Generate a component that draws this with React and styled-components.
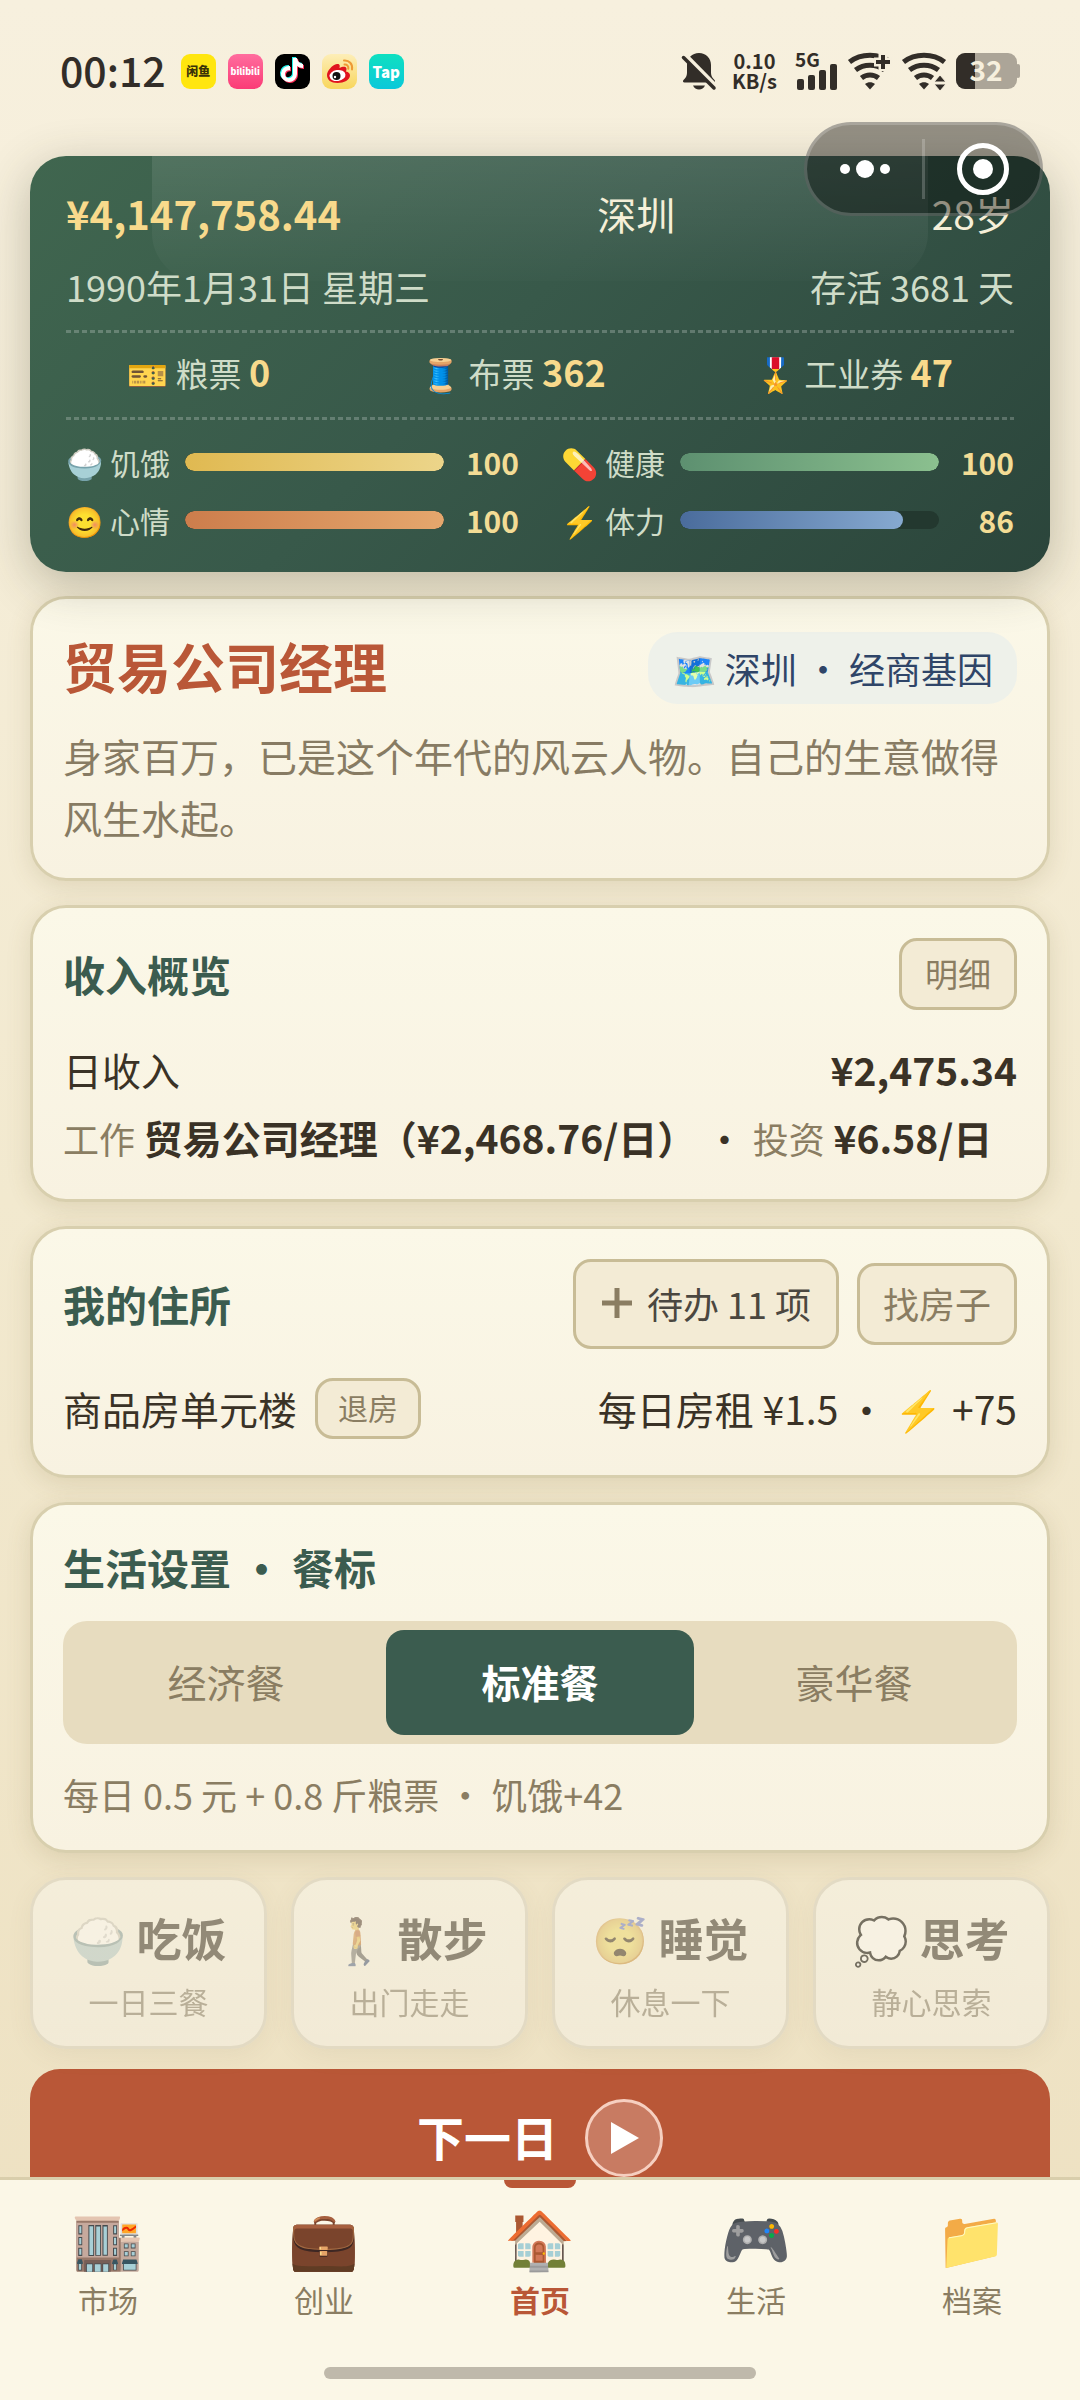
import styled, { createGlobalStyle } from "styled-components";

const GlobalStyle = createGlobalStyle`
  * {
    box-sizing: border-box;
  }
  body {
    margin: 0;
    color: #3a3226;
    font-family: "Noto Sans CJK SC", "Noto Color Emoji", sans-serif;
  }
  button {
    font-family: inherit;
    cursor: pointer;
  }
  h1, h2, p {
    margin: 0;
  }
  svg {
    display: block;
    overflow: visible;
  }
`;

const Page = styled.div`
  position: relative;
  height: 100vh;
  display: flex;
  flex-direction: column;
  background: linear-gradient(#f7f0de, #f2e9cf 50%, #ede0c0);
`;

/* status bar */
const StatusBar = styled.header`
  display: flex;
  justify-content: space-between;
  align-items: center;
  height: 108px;
  padding: 34px 60px 0;
  flex-shrink: 0;
  color: #322d28;
`;
const StatusGroup = styled.div`
  display: flex;
  align-items: center;
  gap: ${(props) => props.$gap}px;
`;
const Clock = styled.time`
  font-size: 41px;
  line-height: 44px;
  font-weight: 500;
  margin-right: 3px;
  padding-bottom: 4px;
`;
const AppIcon = styled.span`
  display: flex;
  justify-content: center;
  align-items: center;
  width: 35px;
  height: 35px;
  border-radius: 9px;
  font-size: ${(props) => props.$size || 12}px;
  line-height: 1;
  font-weight: 900;
  color: ${(props) => props.$color || "white"};
  background: ${(props) => props.$bg};
`;
const NetSpeed = styled.span`
  display: flex;
  flex-direction: column;
  margin: 0 8px 0 6px;
  font-size: 20px;
  line-height: 20px;
  font-weight: 700;
  text-align: center;
`;

/* mini program capsule, floats over the page */
const Capsule = styled.div`
  position: absolute;
  top: 122px;
  right: 37px;
  z-index: 5;
  display: flex;
  align-items: center;
  width: 239px;
  height: 94px;
  border: 3px solid rgba(255, 255, 255, 0.2);
  border-radius: 47px;
  background-color: rgba(0, 0, 0, 0.4);
`;
const CapsuleButton = styled.button`
  flex: 1;
  display: flex;
  justify-content: center;
  padding: 0;
  border: none;
  background: none;
`;
const CapsuleLine = styled.span`
  width: 3px;
  height: 60px;
  background-color: rgba(255, 255, 255, 0.2);
`;

const Main = styled.main`
  flex: 1;
  min-height: 0;
  overflow-y: auto;
  scrollbar-width: none;
  display: flex;
  flex-direction: column;
  gap: 24px;
  padding: 48px 30px 0;
  > * {
    flex-shrink: 0;
  }
`;

/* summary panel */
const Summary = styled.section`
  position: relative;
  z-index: 1;
  padding: 25px 36px 30px;
  border-radius: 36px;
  color: #cfdcc8;
  background: linear-gradient(135deg, #40664f, #38594a 45%, #2b453b);
  box-shadow: 0 12px 48px rgba(60, 60, 40, 0.3);
  &::before {
    content: "";
    position: absolute;
    top: 0;
    left: 12%;
    right: 12%;
    height: 30%;
    border-radius: 0 0 48px 48px;
    background: linear-gradient(rgba(255, 255, 255, 0.1), rgba(255, 255, 255, 0.01));
  }
`;
const SummaryRow = styled.div`
  position: relative;
  display: flex;
  justify-content: space-between;
  font-size: ${(props) => (props.$top ? 39 : 36)}px;
  line-height: ${(props) => (props.$top ? 64 : 56)}px;
  margin-bottom: ${(props) => (props.$top ? 13 : 16)}px;
  color: ${(props) => (props.$top ? "#f5efd8" : "inherit")};
`;
const Money = styled.strong`
  font-size: 40px;
  color: #f8da8c;
`;
const Dashes = styled.div`
  height: 3px;
  background: repeating-linear-gradient(
    90deg,
    rgba(255, 255, 255, 0.22) 0 5px,
    transparent 5px 8px
  );
`;
const Tickets = styled.div`
  display: flex;
  justify-content: space-around;
  gap: 28px;
  padding: 10px 0 15px;
  font-size: 33px;
  line-height: 57px;
  strong {
    font-size: 36px;
    color: #f8da8c;
  }
`;
const Stats = styled.div`
  display: grid;
  grid-template-columns: 1fr 1fr;
  gap: 14px 42px;
  padding-top: 20px;
`;
const Stat = styled.div`
  display: flex;
  align-items: center;
  gap: 14px;
  font-size: 30px;
  line-height: 44px;
`;
const StatLabel = styled.span`
  width: 105px;
  white-space: nowrap;
`;
const Track = styled.div`
  flex: 1;
  height: 18px;
  border-radius: 9px;
  overflow: hidden;
  background-color: #23382f;
`;
const Fill = styled.div`
  height: 100%;
  border-radius: 9px;
  background: linear-gradient(90deg, ${(props) => props.$from}, ${(props) => props.$to});
`;
const StatValue = styled.strong`
  width: 61px;
  text-align: right;
  color: #f3dc95;
`;

/* cards */
const Card = styled.section`
  padding: 30px;
  border: 3px solid #d8cfae;
  border-radius: 36px;
  background: linear-gradient(#fbf8e8, #f8f2e1);
  box-shadow: 0 6px 24px rgba(120, 100, 50, 0.16);
`;
const CardHead = styled.div`
  display: flex;
  justify-content: space-between;
  align-items: center;
  margin-bottom: ${(props) => props.$gap || 28}px;
`;
const JobTitle = styled.h1`
  padding-bottom: 4px;
  font-size: 54px;
  line-height: 74px;
  color: #b95737;
`;
const CardTitle = styled.h2`
  font-size: 42px;
  line-height: 64px;
  color: #3b5c4f;
`;
const Origin = styled.span`
  padding: 0 24px;
  border-radius: 30px;
  font-size: 36px;
  line-height: 72px;
  color: #2f4568;
  background-color: #eef1ea;
`;
const Description = styled.p`
  font-size: 39px;
  line-height: 62px;
  color: #877b63;
`;
const Row = styled.div`
  display: flex;
  justify-content: space-between;
  align-items: center;
  margin-bottom: 6px;
  font-size: 39px;
  line-height: 62px;
`;
const Breakdown = styled.p`
  font-size: 39px;
  line-height: 62px;
  white-space: nowrap;
`;
const Muted = styled.span`
  font-size: 36px;
  color: #8a7d62;
`;
const Hint = styled.p`
  margin-top: 26px;
  padding-bottom: 2px;
  font-size: 36px;
  line-height: 48px;
  color: #8a7d62;
`;
const Group = styled.div`
  display: flex;
  align-items: center;
  gap: 18px;
`;
const Button = styled.button`
  display: flex;
  align-items: center;
  gap: 14px;
  height: ${(props) => props.$height}px;
  padding: 0 ${(props) => props.$pad || 23}px 2px;
  border: 3px solid #c8bc96;
  border-radius: 18px;
  font-size: ${(props) => props.$size}px;
  color: ${(props) => (props.$dark ? "#4b4740" : "#8a7d62")};
  background-color: #f3ebd5;
`;

const Segments = styled.div`
  display: flex;
  gap: 6px;
  padding: 9px;
  border-radius: 24px;
  background-color: #e7dcbf;
`;
const Segment = styled.button`
  flex: 1;
  height: 105px;
  padding: 0 0 4px;
  border: none;
  border-radius: 18px;
  font-size: 39px;
  font-weight: ${(props) => (props.$active ? 700 : 400)};
  color: ${(props) => (props.$active ? "white" : "#8a7d62")};
  background-color: ${(props) => (props.$active ? "#3b5c4f" : "transparent")};
`;

const Actions = styled.div`
  display: grid;
  grid-template-columns: repeat(4, 1fr);
  gap: 24px;
`;
const Action = styled.button`
  height: 172px;
  padding: 4px 0 0;
  border: 3px solid #dcd3b8;
  border-radius: 36px;
  color: #3a3226;
  background: linear-gradient(#fbf8e8, #f8f2e1);
  box-shadow: 0 6px 24px rgba(120, 100, 50, 0.16);
  filter: grayscale(0.4);
  opacity: 0.5;
`;
const ActionName = styled.strong`
  display: block;
  font-size: 45px;
  line-height: 66px;
`;
const ActionNote = styled.span`
  display: block;
  font-size: 30px;
  line-height: 48px;
  padding-top: 6px;
  color: #8a7d62;
`;
const NextDay = styled.button`
  display: flex;
  justify-content: center;
  align-items: center;
  gap: 27px;
  height: 138px;
  margin-top: -4px;
  padding: 0;
  border: none;
  border-radius: 30px;
  font-size: 47px;
  font-weight: 700;
  color: white;
  background-color: #b95737;
`;
const NextLabel = styled.span`
  padding-bottom: 6px;
`;
const PlayCircle = styled.span`
  display: flex;
  justify-content: center;
  align-items: center;
  width: 78px;
  height: 78px;
  border: 3px solid #f6cfc0;
  border-radius: 50%;
  background-color: rgba(255, 255, 255, 0.22);
`;

/* bottom navigation */
const Footer = styled.footer`
  display: flex;
  flex-direction: column;
  align-items: center;
  flex-shrink: 0;
  height: 223px;
  border-top: 3px solid #d9ceac;
  background-color: #fbf7e7;
`;
const Nav = styled.nav`
  display: flex;
  width: 100%;
  height: 187px;
`;
const NavItem = styled.a`
  flex: 1;
  position: relative;
  display: flex;
  flex-direction: column;
  align-items: center;
  gap: 7px;
  padding-top: 22px;
  font-size: 30px;
  line-height: 48px;
  font-weight: ${(props) => (props.$active ? 700 : 400)};
  color: ${(props) => (props.$active ? "#b95737" : "#8a7d62")};
  text-decoration: none;
  &::before {
    content: "";
    display: ${(props) => (props.$active ? "block" : "none")};
    position: absolute;
    top: 0;
    width: 72px;
    height: 8px;
    border-radius: 0 0 8px 8px;
    background-color: #b95737;
  }
`;
const NavIcon = styled.span`
  font-size: 57px;
  line-height: 66px;
`;
const HomeIndicator = styled.div`
  width: 40%;
  height: 12px;
  border-radius: 6px;
  background-color: #bfb9ab;
`;

const tickets = [
  { icon: "🎫", name: "粮票", count: 0 },
  { icon: "🧵", name: "布票", count: 362 },
  { icon: "🎖️", name: "工业券", count: 47 },
];

const stats = [
  { icon: "🍚", name: "饥饿", value: 100, from: "#e0b951", to: "#ecd58a" },
  { icon: "💊", name: "健康", value: 100, from: "#5d9070", to: "#8bc08f" },
  { icon: "😊", name: "心情", value: 100, from: "#cc7d4c", to: "#e5a76d" },
  { icon: "⚡", name: "体力", value: 86, from: "#4a6c9c", to: "#86a9d0" },
];

const meals = ["经济餐", "标准餐", "豪华餐"];

const actions = [
  { icon: "🍚", name: "吃饭", note: "一日三餐" },
  { icon: "🚶", name: "散步", note: "出门走走" },
  { icon: "😴", name: "睡觉", note: "休息一下" },
  { icon: "💭", name: "思考", note: "静心思索" },
];

const navItems = [
  { icon: "🏬", name: "市场" },
  { icon: "💼", name: "创业" },
  { icon: "🏠", name: "首页", active: true },
  { icon: "🎮", name: "生活" },
  { icon: "📁", name: "档案" },
];

const notePath = "M16 2h4c.5 3.500 2.500 5.500 6 6v4c-2.300 0-4.300-.7-6-1.900V18a8 8 0 1 1-7-7.900v4.200a4 4 0 1 0 3 3.700z";

const TikTok = () => (
  <svg width="30" height="30" viewBox="0 0 30 30">
    <path d={notePath} fill="#25f4ee" transform="translate(-1 -1)" />
    <path d={notePath} fill="#fe2c55" transform="translate(1 1)" />
    <path d={notePath} fill="white" />
  </svg>
);

const Weibo = () => (
  <svg width="35" height="35" viewBox="0 0 35 35">
    <path
      d="M5 21c0-4 5-10 10-11 3-.5 3 2 2.500 4 3-1.500 7-2 7 1 0 1-.5 2-.5 2.500 2.500.5 4 2 4 4C28 26 22 29 15.500 29S5 26 5 21z"
      fill="#e0141e"
    />
    <ellipse cx="15.500" cy="21.500" rx="8" ry="5.500" fill="white" transform="rotate(-8 15.500 21.500)" />
    <circle cx="14.500" cy="22" r="4" fill="#111" />
    <circle cx="13" cy="23" r="1.200" fill="white" />
    <path d="M22 6.500c5-.5 9 3.500 8 9M22.500 10.500c2.500-.3 4.300 1.700 3.800 4.200" fill="none" stroke="#ee9a35" strokeWidth="2" strokeLinecap="round" />
  </svg>
);

const BellOff = () => (
  <svg width="34" height="38" viewBox="0 0 34 38" fill="currentColor">
    <path d="M17 1c-7 0-12 5-12 12v8c0 3-1.500 5-3.500 7-1 1-.5 2.500 1 2.500h29c1.500 0 2-1.500 1-2.500-2-2-3.500-4-3.500-7v-8c0-7-5-12-12-12z" />
    <path d="M11 33.500h12c-1 2.500-3.500 4-6 4s-5-1.500-6-4z" />
    <path d="M4 3.500 34 34" stroke="#f6efdd" strokeWidth="4" />
    <path d="M1.500 5.500 32 36" stroke="currentColor" strokeWidth="3.500" strokeLinecap="round" />
  </svg>
);

const Signal = () => (
  <svg width="43" height="38" viewBox="0 0 43 38" fill="currentColor">
    <text x="0" y="15" fontSize="19" fontWeight="700">5G</text>
    <rect x="2" y="27" width="7" height="11" rx="2" />
    <rect x="13" y="23" width="7" height="15" rx="2" />
    <rect x="24" y="18" width="7" height="20" rx="2" />
    <rect x="35" y="12" width="7" height="26" rx="2" />
  </svg>
);

const Wifi = ({ plus }) => (
  <svg width="44" height="38" viewBox="0 0 44 38" fill="none" stroke="currentColor" strokeWidth="5">
    <path d="M1.500 10C13 1 31 1 42.500 10" />
    <path d="M7.500 18c8.500-6.500 20.500-6.500 29 0" />
    <path d="M13.500 26c5-4 12-4 17 0" />
    <path d="M17 32c3-2.500 7-2.500 10 0L22 37.500z" fill="currentColor" stroke="none" />
    {plus ? (
      <>
        <path d="M26 10h18M35 1v18" stroke="#f6efdd" strokeWidth="9" />
        <path d="M28 10h14M35 3v14" strokeWidth="4" />
      </>
    ) : (
      <path d="M38 23l6 7H32zM38 39l6-7H32z" fill="currentColor" stroke="#f6efdd" strokeWidth="1" />
    )}
  </svg>
);

const Battery = () => (
  <svg width="64" height="38" viewBox="0 0 64 38">
    <rect x="0" y="1" width="61" height="36" rx="9" fill="#aca598" />
    <rect x="60" y="12" width="4" height="14" rx="2" fill="#aca598" />
    <path d="M9 1h10v36H9a9 9 0 0 1-9-9V10a9 9 0 0 1 9-9z" fill="#322d28" />
    <text x="30" y="29" fontSize="28" fontWeight="700" textAnchor="middle" fill="#f6efdd">32</text>
  </svg>
);

const App = () => {
  return (
    <Page>
      <GlobalStyle />
      <StatusBar>
        <StatusGroup $gap={12}>
          <Clock>00:12</Clock>
          <AppIcon $bg="#ffe60f" $color="#3a3208">闲鱼</AppIcon>
          <AppIcon $bg="linear-gradient(#ff6d9e, #fb3b76)" $size={9}>bilibili</AppIcon>
          <AppIcon $bg="#000"><TikTok /></AppIcon>
          <AppIcon $bg="linear-gradient(#fdeeb8, #f8d65c)"><Weibo /></AppIcon>
          <AppIcon $bg="linear-gradient(#0fe0c0, #0bc8da)" $size={15}>Tap</AppIcon>
        </StatusGroup>
        <StatusGroup $gap={10}>
          <BellOff />
          <NetSpeed>
            <span>0.10</span>
            <span>KB/s</span>
          </NetSpeed>
          <Signal />
          <Wifi plus />
          <Wifi />
          <Battery />
        </StatusGroup>
      </StatusBar>

      <Capsule>
        <CapsuleButton aria-label="更多">
          <svg width="52" height="20" viewBox="0 0 52 20" fill="white">
            <circle cx="6" cy="10" r="5" />
            <circle cx="26" cy="10" r="9" />
            <circle cx="46" cy="10" r="5" />
          </svg>
        </CapsuleButton>
        <CapsuleLine />
        <CapsuleButton aria-label="关闭">
          <svg width="54" height="54" viewBox="0 0 54 54">
            <circle cx="27" cy="27" r="23.500" fill="none" stroke="white" strokeWidth="5" />
            <circle cx="27" cy="27" r="10" fill="white" />
          </svg>
        </CapsuleButton>
      </Capsule>

      <Main>
        <Summary>
          <SummaryRow $top>
            <Money>¥4,147,758.44</Money>
            <span>深圳</span>
            <span>28岁</span>
          </SummaryRow>
          <SummaryRow>
            <span>1990年1月31日 星期三</span>
            <span>存活 3681 天</span>
          </SummaryRow>
          <Dashes />
          <Tickets>
            {tickets.map((item) => (
              <span key={item.name}>
                {item.icon} {item.name} <strong>{item.count}</strong>
              </span>
            ))}
          </Tickets>
          <Dashes />
          <Stats>
            {stats.map((item) => (
              <Stat key={item.name}>
                <StatLabel>{item.icon} {item.name}</StatLabel>
                <Track role="progressbar" aria-label={item.name} aria-valuenow={item.value}>
                  <Fill $from={item.from} $to={item.to} style={{ width: `${item.value}%` }} />
                </Track>
                <StatValue>{item.value}</StatValue>
              </Stat>
            ))}
          </Stats>
        </Summary>

        <Card>
          <CardHead $gap={17}>
            <JobTitle>贸易公司经理</JobTitle>
            <Origin>🗺️ 深圳 · 经商基因</Origin>
          </CardHead>
          <Description>
            身家百万，已是这个年代的风云人物。自己的生意做得风生水起。
          </Description>
        </Card>

        <Card>
          <CardHead>
            <CardTitle>收入概览</CardTitle>
            <Button $height={72} $size={33}>明细</Button>
          </CardHead>
          <Row>
            <span>日收入</span>
            <strong>¥2,475.34</strong>
          </Row>
          <Breakdown>
            <Muted>工作</Muted> <strong>贸易公司经理（¥2,468.76/日）</strong> · <Muted>投资</Muted>{" "}
            <strong>¥6.58/日</strong>
          </Breakdown>
        </Card>

        <Card>
          <CardHead>
            <CardTitle>我的住所</CardTitle>
            <Group>
              <Button $height={90} $size={36} $pad={25} $dark>
                <svg width="32" height="32" viewBox="0 0 32 32" stroke="#8a7d62" strokeWidth="5">
                  <path d="M1 16h30M16 1v30" />
                </svg>
                待办 11 项
              </Button>
              <Button $height={82} $size={36}>找房子</Button>
            </Group>
          </CardHead>
          <Row>
            <Group>
              商品房单元楼
              <Button $height={61} $size={30} $pad={20}>退房</Button>
            </Group>
            <span>每日房租 ¥1.5 · ⚡ +75</span>
          </Row>
        </Card>

        <Card>
          <CardHead $gap={22}>
            <CardTitle>生活设置 · 餐标</CardTitle>
          </CardHead>
          <Segments>
            {meals.map((meal) => (
              <Segment key={meal} $active={meal === "标准餐"} aria-pressed={meal === "标准餐"}>
                {meal}
              </Segment>
            ))}
          </Segments>
          <Hint>每日 0.5 元 + 0.8 斤粮票 · 饥饿+42</Hint>
        </Card>

        <Actions>
          {actions.map((item) => (
            <Action key={item.name}>
              <ActionName>{item.icon} {item.name}</ActionName>
              <ActionNote>{item.note}</ActionNote>
            </Action>
          ))}
        </Actions>

        <NextDay>
          <NextLabel>下一日</NextLabel>
          <PlayCircle>
            <svg width="36" height="32" viewBox="0 0 36 32" fill="white">
              <path d="M5 0l28 16L5 32z" />
            </svg>
          </PlayCircle>
        </NextDay>
      </Main>

      <Footer>
        <Nav>
          {navItems.map((item) => (
            <NavItem key={item.name} href="#" $active={item.active}>
              <NavIcon>{item.icon}</NavIcon>
              {item.name}
            </NavItem>
          ))}
        </Nav>
        <HomeIndicator />
      </Footer>
    </Page>
  );
};

export default App;
